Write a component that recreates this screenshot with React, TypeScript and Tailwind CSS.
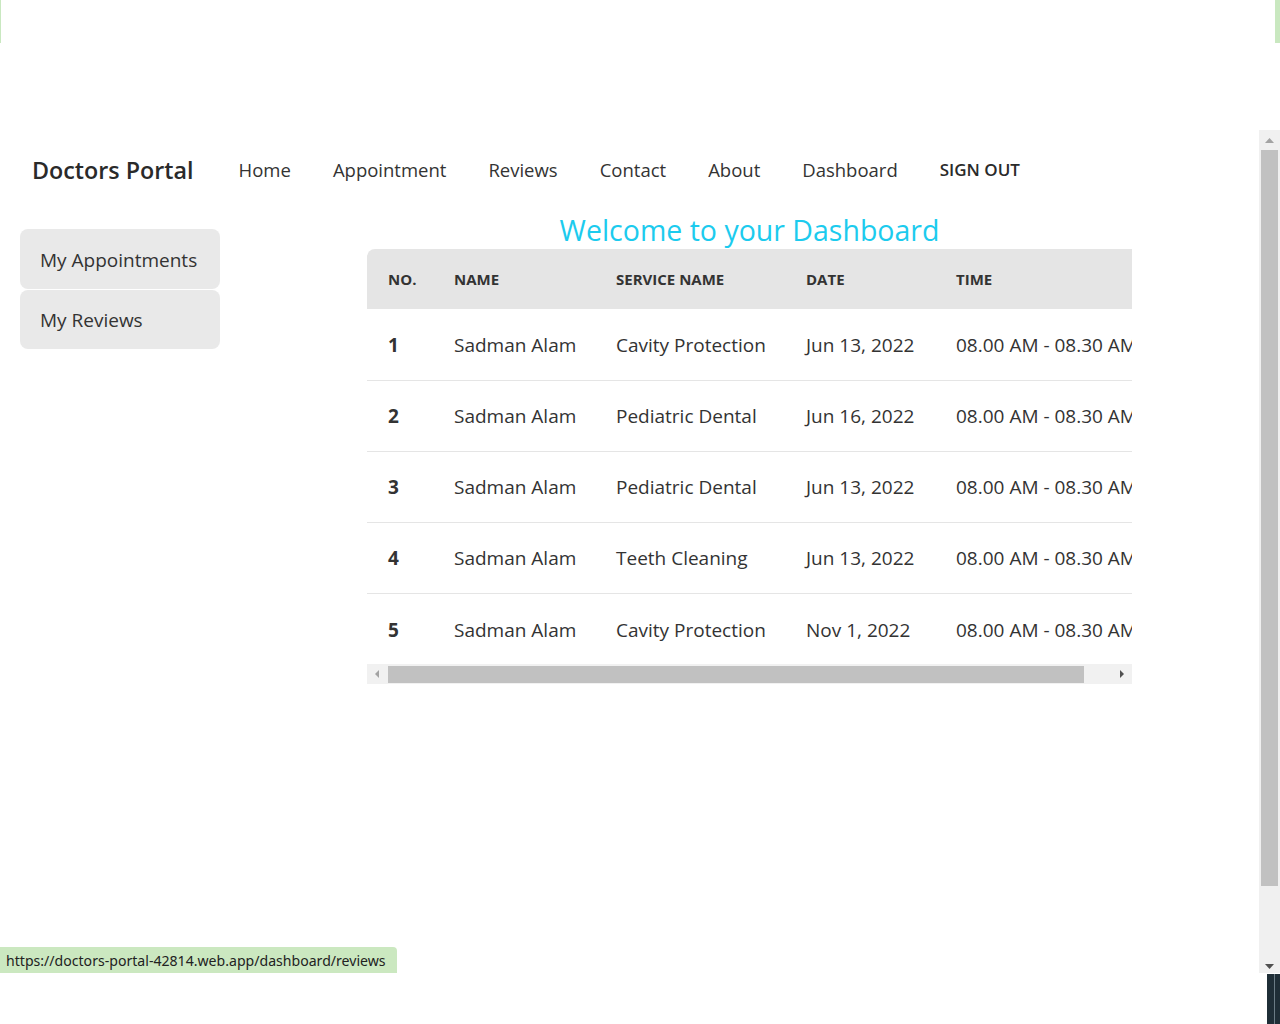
import React from "react";

type Row = { no: number; name: string; service: string; date: string; time: string };

const rows: Row[] = [
  { no: 1, name: "Sadman Alam", service: "Cavity Protection", date: "Jun 13, 2022", time: "08.00 AM - 08.30 AM" },
  { no: 2, name: "Sadman Alam", service: "Pediatric Dental", date: "Jun 16, 2022", time: "08.00 AM - 08.30 AM" },
  { no: 3, name: "Sadman Alam", service: "Pediatric Dental", date: "Jun 13, 2022", time: "08.00 AM - 08.30 AM" },
  { no: 4, name: "Sadman Alam", service: "Teeth Cleaning", date: "Jun 13, 2022", time: "08.00 AM - 08.30 AM" },
  { no: 5, name: "Sadman Alam", service: "Cavity Protection", date: "Nov 1, 2022", time: "08.00 AM - 08.30 AM" },
];

const navLinks = ["Home", "Appointment", "Reviews", "Contact", "About", "Dashboard"];

function Navbar() {
  return (
    <div className="h-[84px] flex items-center pl-8">
      <div className="text-[23.3px] font-semibold text-[#2a2a2a] mr-[45px]">Doctors Portal</div>
      <ul className="flex items-center gap-[42px] text-[18.5px] text-[#333]">
        {navLinks.map(l => (
          <li key={l}>{l}</li>
        ))}
        <li className="text-[17px] font-semibold text-[#2a2a2a]">SIGN OUT</li>
      </ul>
    </div>
  );
}

function Sidebar() {
  return (
    <div className="w-[367px] pl-5 pt-[17px] flex flex-col gap-px">
      <div className="w-[200px] h-[60px] rounded-lg bg-[#e9e9e9] flex items-center pl-5 pt-[2px] text-[19px] text-[#333]">
        My Appointments
      </div>
      <div className="w-[200px] h-[59px] rounded-lg bg-[#e9e9e9] flex items-center pl-5 pt-[2px] text-[19px] text-[#333]">
        My Reviews
      </div>
    </div>
  );
}

function HScrollbar() {
  return (
    <div className="h-[20px] bg-[#f1f1f1] flex items-center">
      <div className="w-[21px] flex justify-center">
        <svg width="5" height="8" viewBox="0 0 5 8"><path d="M4 0L0 4L4 8Z" fill="#a3a3a3" /></svg>
      </div>
      <div className="w-[696px] h-[17px] bg-[#c1c1c1]" />
      <div className="flex-1 flex justify-end pr-[8px]">
        <svg width="5" height="8" viewBox="0 0 5 8"><path d="M1 0L5 4L1 8Z" fill="#505050" /></svg>
      </div>
    </div>
  );
}

function AppointmentsTable() {
  return (
    <div className="w-[765px] overflow-hidden">
      <table className="table-fixed w-[795px] border-collapse text-left">
        <colgroup>
          <col className="w-[67px]" />
          <col className="w-[162px]" />
          <col className="w-[190px]" />
          <col className="w-[150px]" />
          <col className="w-[226px]" />
        </colgroup>
        <thead>
          <tr className="h-[60px] bg-[#e5e5e5] text-[15px] font-bold text-[#333]">
            <th className="pl-[21px] rounded-tl-lg">NO.</th>
            <th className="pl-5">NAME</th>
            <th className="pl-5">SERVICE NAME</th>
            <th className="pl-5">DATE</th>
            <th className="pl-5">TIME</th>
          </tr>
        </thead>
        <tbody>
          {rows.map((r, i) => (
            <tr key={r.no} className={`h-[71px] text-[19px] text-[#333] ${i < rows.length - 1 ? "border-b border-[#e5e5e5]" : ""}`}>
              <td className="pl-[21px] pt-[2px] font-bold">{r.no}</td>
              <td className="pl-5 pt-[2px] whitespace-nowrap">{r.name}</td>
              <td className="pl-5 pt-[2px] whitespace-nowrap">{r.service}</td>
              <td className="pl-5 pt-[2px] whitespace-nowrap">{r.date}</td>
              <td className="pl-5 pt-[2px] whitespace-nowrap">{r.time}</td>
            </tr>
          ))}
        </tbody>
      </table>
      <HScrollbar />
    </div>
  );
}

function VScrollbar() {
  return (
    <div className="w-[21px] mt-[2px] h-[843px] bg-[#f0f0f0] flex flex-col items-center">
      <div className="h-[20px] flex items-center">
        <svg width="9" height="5" viewBox="0 0 9 5"><path d="M0 5L4.5 0L9 5Z" fill="#a3a3a3" /></svg>
      </div>
      <div className="w-[17px] h-[736px] bg-[#c1c1c1]" />
      <div className="flex-1 flex items-end pb-[4px]">
        <svg width="9" height="5" viewBox="0 0 9 5"><path d="M0 0L4.5 5L9 0Z" fill="#505050" /></svg>
      </div>
    </div>
  );
}

export default function App() {
  return (
    <div className="relative w-[1280px] h-[1024px] bg-white overflow-hidden font-['Open_Sans',sans-serif]">
      <div className="h-[128px] flex justify-between items-start">
        <div className="w-px h-[43px] bg-[#c9e8c0]" />
        <div className="w-[5px] h-[43px] bg-[#c9e8c0]" />
      </div>
      <div className="flex">
        <div className="w-[1259px]">
          <Navbar />
          <div className="flex">
            <Sidebar />
            <div className="w-[765px]">
              <h1 className="h-[37px] text-center text-[28.5px] leading-[37px] text-[#1ccbee]">Welcome to your Dashboard</h1>
              <AppointmentsTable />
            </div>
          </div>
        </div>
        <VScrollbar />
      </div>
      <div className="absolute left-0 top-[947px] h-[26px] w-[397px] bg-[#cbe8c0] rounded-tr-sm flex items-center pl-[6px] pt-[2px] text-[14.1px] text-[#222] font-['Noto_Sans',sans-serif]">
        https://doctors-portal-42814.web.app/dashboard/reviews
      </div>
      <div className="absolute right-0 top-[974px] w-[13px] h-[50px] bg-[#1f2e37] flex justify-end pr-[5px]">
        <div className="w-px h-full bg-[#6b7c85]" />
      </div>
    </div>
  );
}
